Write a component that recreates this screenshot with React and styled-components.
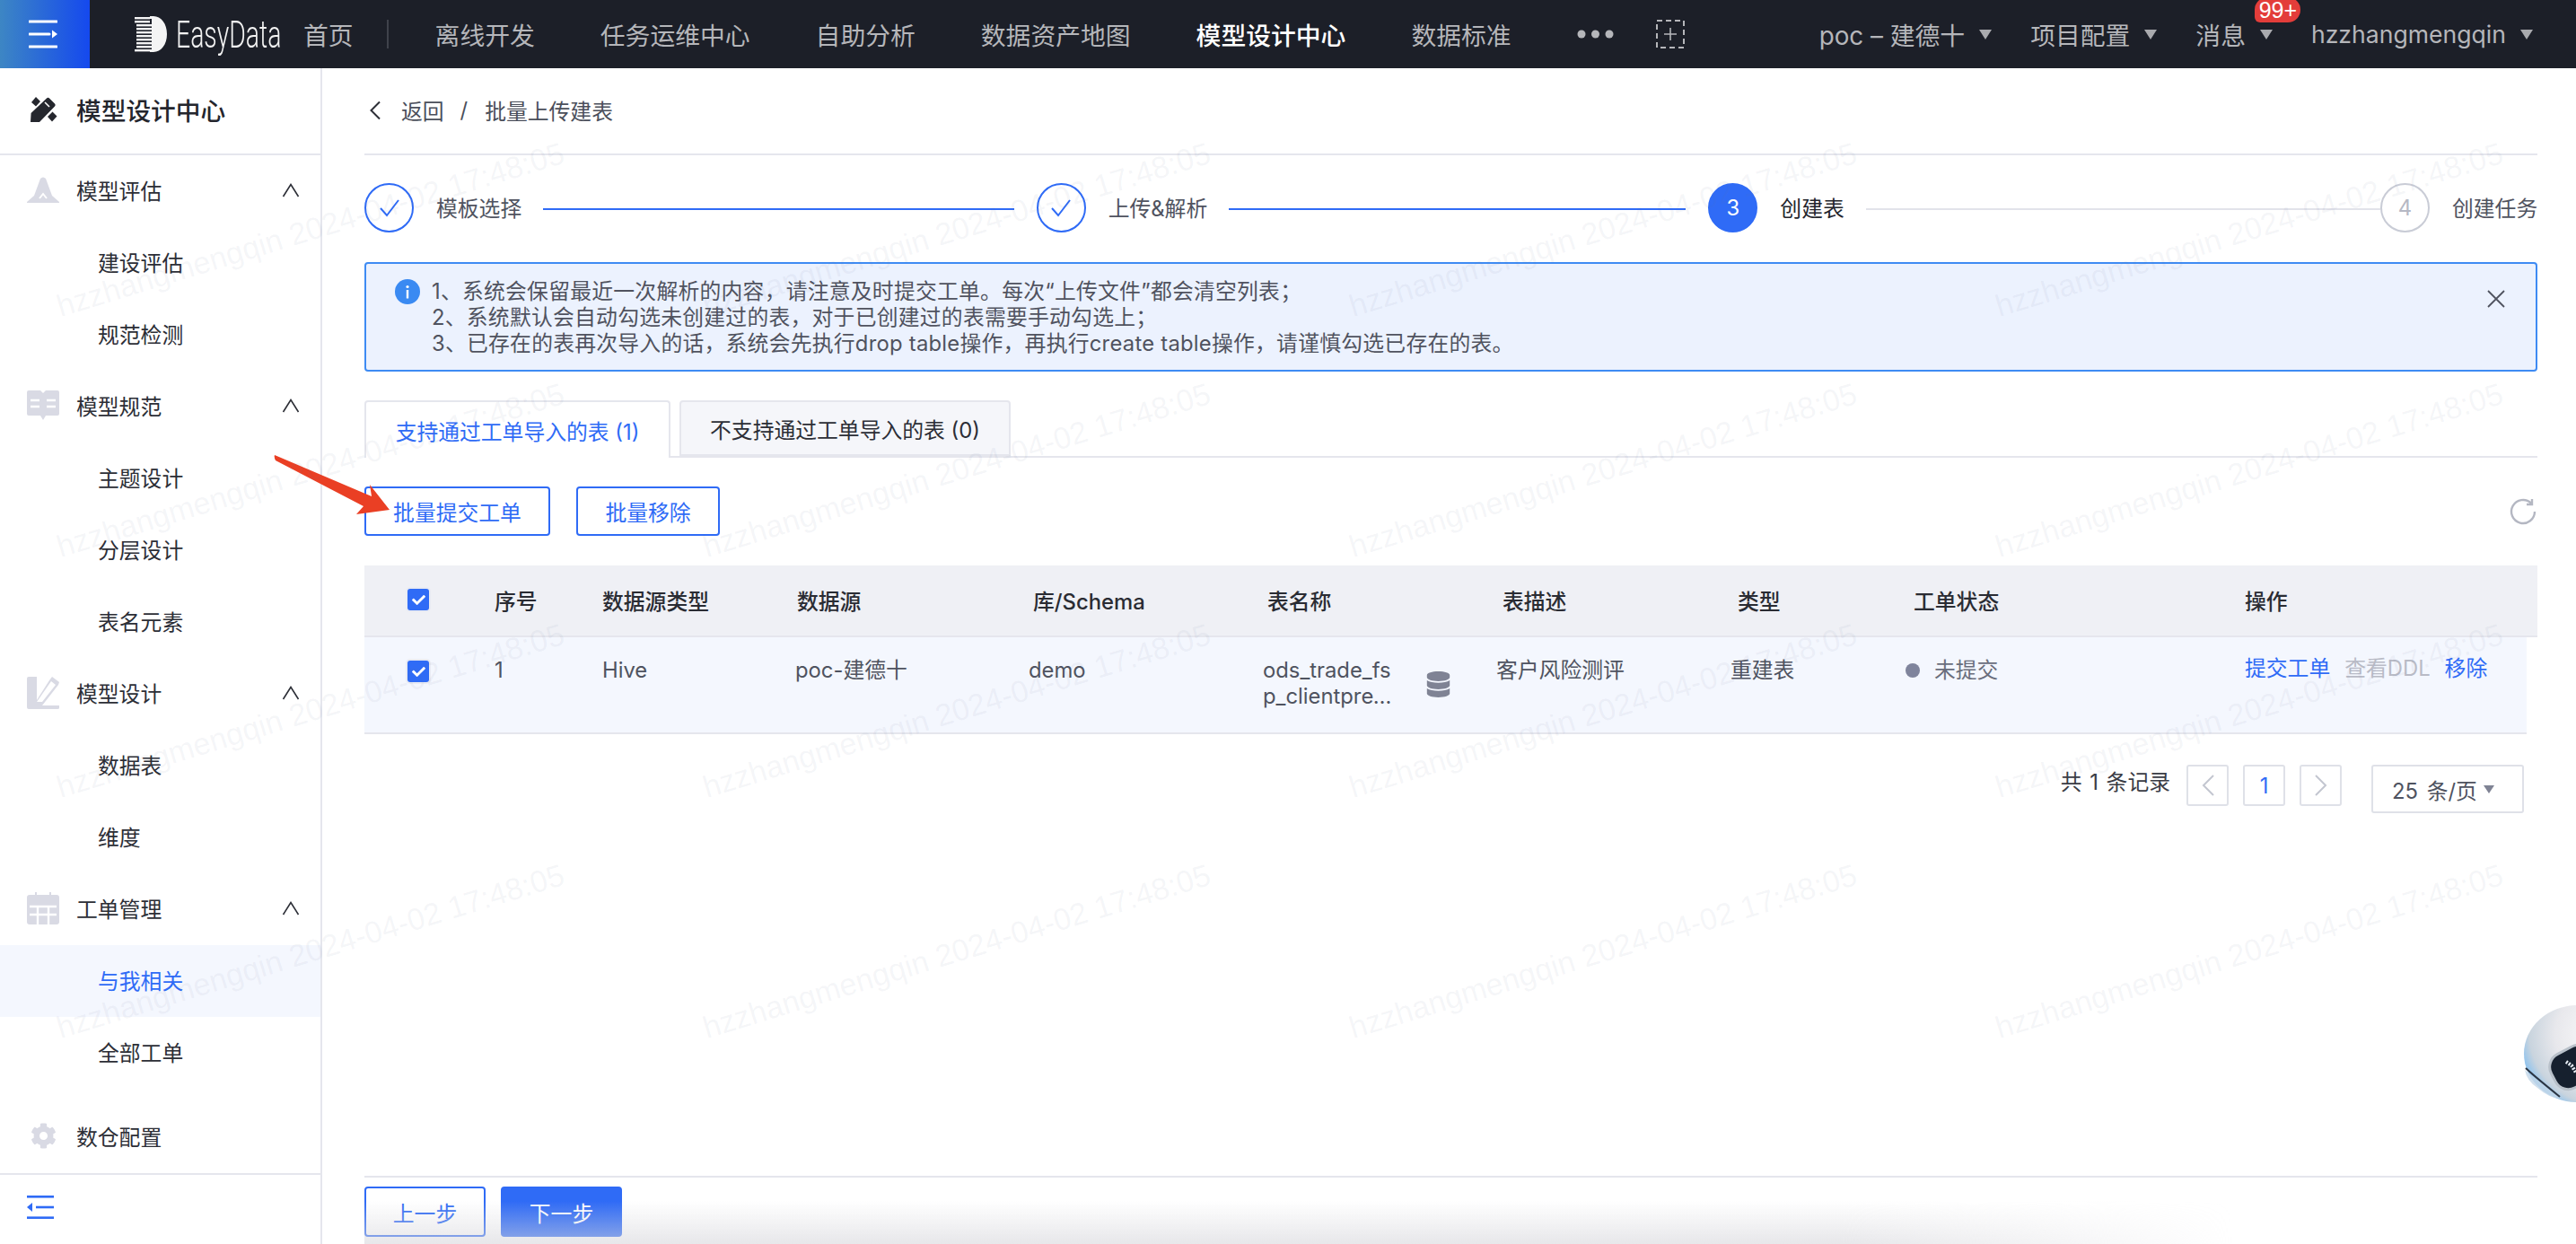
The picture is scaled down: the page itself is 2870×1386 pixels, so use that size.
import React from "react";
import styled, { createGlobalStyle } from "styled-components";
import { FaCog, FaDatabase, FaCheck } from "react-icons/fa";

const FONT = 'Inter,"Noto Sans CJK SC",sans-serif';
const BLUE = "#2f6bf6";
const LINE = "#e5e6ed";

const Global = createGlobalStyle`
  html, body { margin: 0; padding: 0; width: 2870px; height: 1386px; overflow: hidden; background: #fff; }
  body { font-family: ${FONT}; font-size: 23.8px; color: #2c2e36; }
  * { box-sizing: border-box; }
`;

const Page = styled.div`
  position: relative;
  width: 2870px;
  height: 1386px;
  display: flex;
  flex-direction: column;
  overflow: hidden;
`;
const TopBar = styled.header`
  position: relative;
  z-index: 6;
  flex: none;
  height: 76px;
  display: flex;
  align-items: center;
  background: #1c1f28;
  color: #b5b6ba;
  font-size: 27.8px;
`;
const MenuToggle = styled.div`
  width: 100px;
  height: 76px;
  flex: none;
  display: flex;
  align-items: center;
  justify-content: center;
  background: linear-gradient(90deg, #3d86c4, #1549ee);
  padding-right: 4px;
`;
const Brand = styled.div`
  display: flex;
  align-items: center;
  margin-left: 50px;
  width: 188px;
  flex: none;
`;
const BrandMark = styled.svg`
  width: 36px;
  height: 40px;
  flex: none;
`;
const BrandName = styled.span`
  display: block;
  width: 112px;
  flex: none;
  margin-left: 10px;
  color: #f2f2f2;
  font-family: Roboto, sans-serif;
  font-weight: 300;
  font-size: 43px;
  line-height: 1;
  transform: scaleX(0.66);
  transform-origin: left center;
  white-space: nowrap;
`;
const NavItem = styled.span`
  flex: none;
  white-space: nowrap;
  color: ${(p) => (p.$active ? "#fff" : "inherit")};
  font-weight: ${(p) => (p.$active ? 500 : 400)};
`;
const NavSep = styled.i`
  width: 2px;
  height: 32px;
  background: #3f424b;
  margin: 0 52px 0 37px;
  flex: none;
`;
const NavList = styled.nav`
  display: flex;
  align-items: center;
  gap: 73px;
`;
const NavAdd = styled.span`
  margin-left: 47px;
  display: flex;
`;
const NavRight = styled.div`
  margin-left: auto;
  padding-right: 48px;
  display: flex;
  align-items: center;
  gap: 43px;
`;
const NavDrop = styled.span`
  position: relative;
  display: flex;
  align-items: center;
  gap: 16px;
  white-space: nowrap;
  font-size: ${(p) => (p.$latin ? "26.6px" : "inherit")};
`;
const Caret = styled.i`
  width: 0;
  height: 0;
  border-left: ${(p) => (p.$small ? 6 : 7)}px solid transparent;
  border-right: ${(p) => (p.$small ? 6 : 7)}px solid transparent;
  border-top: ${(p) => (p.$small ? 9 : 11)}px solid ${(p) => p.$color || "#a9aaae"};
  flex: none;
`;
const Badge = styled.span`
  position: absolute;
  left: 66px;
  top: -21px;
  width: 51px;
  height: 28px;
  border-radius: 14px 14px 14px 6px;
  background: #e33d3a;
  color: #fff;
  font-family: "Liberation Sans", sans-serif;
  font-size: 25px;
  line-height: 28px;
  text-align: center;
`;
const Body = styled.div`
  flex: 1;
  min-height: 0;
  display: flex;
`;
const Sidebar = styled.aside`
  width: 359px;
  flex: none;
  border-right: 2px solid ${LINE};
  display: flex;
  flex-direction: column;
`;
const SideHead = styled.div`
  height: 97px;
  flex: none;
  display: flex;
  align-items: center;
  gap: 21px;
  padding-left: 33px;
  padding-bottom: 4px;
  border-bottom: 2px solid ${LINE};
  font-size: 27.7px;
  font-weight: 500;
  color: #24262d;
`;
const SideRow = styled.div`
  height: 80px;
  flex: none;
  display: flex;
  align-items: center;
  padding-left: ${(p) => (p.$sub ? "109px" : "30px")};
  padding-bottom: 3px;
  background: ${(p) => (p.$active ? "#f4f7fe" : "transparent")};
  color: ${(p) => (p.$active ? BLUE : "#2c2e36")};
`;
const SideIcon = styled.span`
  width: 36px;
  display: flex;
  justify-content: center;
  margin-right: 19px;
  color: #d9dae4;
  flex: none;
`;
const Chevron = styled.svg`
  margin-left: auto;
  margin-right: 23px;
  width: 20px;
  height: 16px;
`;
const SideFill = styled.div`
  flex: 1;
  min-height: 0;
`;
const SideFoot = styled.div`
  height: 79px;
  flex: none;
  border-top: 2px solid ${LINE};
  display: flex;
  align-items: center;
  padding-left: 30px;
  padding-bottom: 5px;
`;
const Main = styled.main`
  flex: 1;
  min-width: 0;
  display: flex;
  flex-direction: column;
  padding: 0 43px 0 47px;
`;
const Crumb = styled.div`
  height: 97px;
  flex: none;
  display: flex;
  align-items: center;
  border-bottom: 2px solid ${LINE};
  color: #4b4f5b;
  padding-left: 5px;
  padding-bottom: 2px;
`;
const CrumbBack = styled.span`
  margin-left: 22px;
`;
const CrumbSep = styled.span`
  margin: 0 19px 0 18px;
`;
const Steps = styled.div`
  margin-top: 31px;
  display: flex;
  align-items: center;
`;
const Step = styled.div`
  display: flex;
  align-items: center;
  flex: ${(p) => (p.$last ? "none" : "1")};
  min-width: 0;
  width: ${(p) => (p.$last ? "175px" : "auto")};
`;
const StepDot = styled.span`
  width: 55px;
  height: 55px;
  flex: none;
  border-radius: 50%;
  display: flex;
  align-items: center;
  justify-content: center;
  border: 2px solid ${(p) => (p.$state === "todo" ? "#c9ccd6" : BLUE)};
  background: ${(p) => (p.$state === "now" ? BLUE : "#fff")};
  color: ${(p) => (p.$state === "now" ? "#fff" : "#b5b8c4")};
`;
const StepLabel = styled.span`
  margin-left: 25px;
  padding-bottom: 2px;
  white-space: nowrap;
  color: ${(p) => (p.$dark ? "#23252c" : "#50535f")};
`;
const StepLine = styled.i`
  flex: 1;
  height: 2px;
  margin: 2px ${(p) => (p.$tight ? "0" : "25px")} 0 24px;
  background: ${(p) => (p.$done ? BLUE : "#e2e3ea")};
`;
const Alert = styled.div`
  margin-top: 33px;
  height: 122px;
  flex: none;
  border: 2px solid #3e8bf3;
  border-radius: 4px;
  background: #ecf2fe;
  display: flex;
  padding: 16px 34px 0 32px;
  color: #50535f;
  line-height: 29px;
  letter-spacing: 0.25px;
`;
const AlertIcon = styled.span`
  width: 28px;
  height: 28px;
  margin-top: 1px;
  flex: none;
  margin-right: 13px;
`;
const AlertText = styled.div`
  flex: 1;
`;
const AlertClose = styled.svg`
  width: 20px;
  height: 20px;
  margin-top: 13px;
  flex: none;
`;
const TabBar = styled.div`
  margin-top: 32px;
  height: 64px;
  flex: none;
  display: flex;
  gap: 10px;
  border-bottom: 2px solid ${LINE};
`;
const Tab = styled.div`
  width: ${(p) => p.$w}px;
  height: ${(p) => (p.$active ? "64px" : "62px")};
  display: flex;
  align-items: center;
  justify-content: center;
  white-space: nowrap;
  border: 2px solid ${LINE};
  border-bottom: ${(p) => (p.$active ? "none" : `2px solid ${LINE}`)};
  border-radius: 4px 4px 0 0;
  background: ${(p) => (p.$active ? "#fff" : "#f5f6fa")};
  color: ${(p) => (p.$active ? BLUE : "#2c2e36")};
`;
const Actions = styled.div`
  margin-top: 32px;
  display: flex;
  align-items: center;
  gap: 29px;
`;
const Button = styled.button`
  height: ${(p) => p.$h || 55}px;
  width: ${(p) => p.$w}px;
  border: 2px solid ${BLUE};
  border-radius: 4px;
  background: ${(p) => (p.$solid ? BLUE : "#fff")};
  color: ${(p) => (p.$solid ? "#fff" : BLUE)};
  font: inherit;
  padding: 0;
`;
const Refresh = styled.svg`
  margin-left: auto;
  margin-right: 0;
  width: 32px;
  height: 32px;
`;
const Table = styled.div`
  margin-top: 33px;
  display: flex;
  flex-direction: column;
`;
const HeadRow = styled.div`
  height: 80px;
  display: grid;
  grid-template-columns: 145px 120px 217px 263px 261px 262px 262px 196px 369px 326px;
  align-items: center;
  background: #eff0f5;
  border-bottom: 2px solid ${LINE};
  font-weight: 500;
  color: #2a2c33;
  padding-bottom: 2px;
`;
const DataRow = styled.div`
  height: 108px;
  width: 2409px;
  display: grid;
  grid-template-columns: 145px 120px 215px 260px 261px 260px 261px 195px 378px 314px;
  align-items: start;
  background: #f4f7fe;
  border-bottom: 2px solid ${LINE};
  padding-top: 22px;
  color: #4f5360;
  line-height: 29px;
`;
const CheckCell = styled.div`
  padding-left: 48px;
  display: flex;
`;
const CheckBox = styled.span`
  width: 24px;
  height: 24px;
  border-radius: 3px;
  background: ${BLUE};
  box-shadow: 0 0 0 2px #e9ebf3;
  color: #fff;
  display: flex;
  align-items: center;
  justify-content: center;
  font-size: 15px;
  margin-top: ${(p) => p.$mt || 0}px;
`;
const NameCell = styled.div`
  display: flex;
  align-items: flex-start;
`;
const NameText = styled.span`
  width: 151px;
  word-break: break-all;
  display: -webkit-box;
  -webkit-box-orient: vertical;
  -webkit-line-clamp: 2;
  overflow: hidden;
`;
const DbIcon = styled.span`
  margin: 16px 0 0 30px;
  color: #7f8394;
  font-size: 29px;
  line-height: 1;
  display: flex;
`;
const Status = styled.div`
  display: flex;
  align-items: center;
  gap: 16px;
  color: #6a6e7c;
`;
const StatusDot = styled.i`
  width: 16px;
  height: 16px;
  border-radius: 50%;
  background: #7f849c;
`;
const Ops = styled.div`
  display: flex;
  gap: 16px;
  white-space: nowrap;
  margin-top: -2px;
`;
const OpLink = styled.span`
  color: ${(p) => (p.$disabled ? "#b9bbc6" : BLUE)};
`;
const Pager = styled.div`
  margin-top: 34px;
  padding-right: 15px;
  display: flex;
  justify-content: flex-end;
  align-items: flex-start;
  gap: 16px;
`;
const PagerTotal = styled.span`
  line-height: 40px;
  margin-right: 2px;
  word-spacing: 2px;
  color: #3a3c45;
`;
const PageBox = styled.span`
  width: 47px;
  height: 46px;
  border: 2px solid #dfe1e8;
  border-radius: 3px;
  display: flex;
  align-items: center;
  justify-content: center;
  color: ${BLUE};
`;
const PageSize = styled.div`
  width: 170px;
  height: 54px;
  margin-left: 17px;
  border: 2px solid #dfe1e8;
  border-radius: 3px;
  display: flex;
  align-items: center;
  gap: 7px;
  padding-left: 21px;
  color: #4f5360;
  white-space: nowrap;
  word-spacing: 3px;
`;
const Footer = styled.footer`
  position: relative;
  margin-top: auto;
  height: 76px;
  flex: none;
  border-top: 2px solid ${LINE};
  padding-top: 10px;
  display: flex;
  gap: 17px;
  align-items: flex-start;
  &::after {
    content: "";
    position: absolute;
    left: 0;
    right: 0;
    top: 0;
    bottom: 0;
    pointer-events: none;
    background: linear-gradient(180deg, rgba(215, 215, 220, 0) 35%, rgba(215, 215, 220, 0.6) 100%);
    -webkit-mask-image: linear-gradient(90deg, #000 68%, transparent 86%);
    mask-image: linear-gradient(90deg, #000 68%, transparent 86%);
  }
`;
const WatermarkLayer = styled.div`
  position: absolute;
  inset: 0;
  z-index: 5;
  pointer-events: none;
  padding: 90px 0 0 69px;
  display: grid;
  grid-template-columns: repeat(4, 720px);
  grid-auto-rows: 268px;
  overflow: hidden;
`;
const WatermarkText = styled.span`
  align-self: end;
  justify-self: start;
  white-space: nowrap;
  font-family: "Liberation Sans", sans-serif;
  font-size: 34.3px;
  line-height: 1;
  color: rgba(100, 112, 155, 0.07);
  transform: rotate(-17deg);
  transform-origin: left bottom;
`;
const Annotation = styled.svg`
  position: absolute;
  left: 296px;
  top: 500px;
  width: 150px;
  height: 80px;
  z-index: 4;
`;
const Robot = styled.svg`
  position: absolute;
  right: 0;
  top: 1116px;
  width: 60px;
  height: 116px;
  z-index: 7;
`;

const HamburgerIcon = () => (
  <svg width="32" height="32" viewBox="0 0 32 32" fill="none">
    <path d="M1 2h30M1 16h22M1 30h30" stroke="#fff" strokeWidth="3" strokeLinecap="round" />
    <path d="M26 11.5l6 4.5-6 4.5z" fill="#fff" />
  </svg>
);
const LogoMark = () => (
  <BrandMark viewBox="0 0 36 40" fill="#f4f4f4">
    {[1, 5, 9, 13, 17, 21, 25, 29, 33, 37].map((y) => (
      <rect key={y} x={y < 6 || y > 33 ? 0 : 2} y={y} width="17" height="2.4" />
    ))}
    <path d="M17 0h4c8.5 0 15 8.5 15 20s-6.5 20-15 20h-4v-3h2V3h-2z" />
  </BrandMark>
);
const DotsIcon = () => (
  <svg width="41" height="10" viewBox="0 0 41 10" fill="#b5b6ba">
    <circle cx="5" cy="5" r="4.5" />
    <circle cx="20.5" cy="5" r="4.5" />
    <circle cx="36" cy="5" r="4.5" />
  </svg>
);
const AddBox = () => (
  <svg width="32" height="32" viewBox="0 0 32 32" fill="none" stroke="#b5b6ba">
    <rect x="1" y="1" width="30" height="30" strokeWidth="2" strokeDasharray="6 4" />
    <path d="M16 9v14M9 16h14" strokeWidth="1.6" />
  </svg>
);
const TitleIcon = () => (
  <svg width="31" height="30" viewBox="0 0 31 30" fill="#25272e">
    <path d="M1 29l.6-10L19 2.500q1.500-1.500 3 0l6 6q1.500 1.500 0 3L11 29z" />
    <path d="M22 12l-5-5" stroke="#fff" strokeWidth="1.6" />
    <path d="M2 7l5-6 5 5-5 5.500zM4 6l3-3M20 23l5.500-5.500 5 5L25 28.500zM23 24l3-3" />
  </svg>
);
const WarnIcon = () => (
  <svg width="36" height="29" viewBox="0 0 36 29" fill="#d9dae4">
    <path d="M15 2q3-3 6 0l7 19 8 7v1H0v-1l8-7z" />
    <path d="M14 24l4-5 4 5" stroke="#fff" strokeWidth="2" fill="none" />
  </svg>
);
const BookIcon = () => (
  <svg width="36" height="33" viewBox="0 0 36 33" fill="#d9dae4">
    <path d="M2 0h13l3 3 3-3h13q2 0 2 2v24q0 2-2 2H21l-3 5-3-5H2q-2 0-2-2V2q0-2 2-2z" />
    <path d="M4 11h10M22 11h10M4 18h10M22 18h10" stroke="#fff" strokeWidth="2.4" />
  </svg>
);
const DesignIcon = () => (
  <svg width="36" height="36" viewBox="0 0 36 36" fill="none">
    <path d="M2 0h9v26L25 4l3-4 8 6-1 3-18 23h19v3q0 1-2 1H2q-2 0-2-2V2q0-2 2-2z" fill="#d9dae4" />
    <path d="M27 5l5 4-15 19h-6z" fill="#fff" />
  </svg>
);
const CalendarIcon = () => (
  <svg width="36" height="36" viewBox="0 0 36 36" fill="#d9dae4">
    <path d="M9 0h2v3h14V0h2v3h6q3 0 3 3v27q0 3-3 3H3q-3 0-3-3V6q0-3 3-3h6z" />
    <path d="M3 16h30M3 25h30M12 16v20M24 16v20" stroke="#fff" strokeWidth="2.4" />
  </svg>
);
const CollapseIcon = () => (
  <svg width="30" height="26" viewBox="0 0 30 26" fill={BLUE}>
    <rect width="30" height="2.6" />
    <rect x="10" y="11.7" width="20" height="2.6" />
    <rect y="23.4" width="30" height="2.6" />
    <path d="M6 8v10l-6-5z" />
  </svg>
);
const ChevronUp = () => (
  <Chevron viewBox="0 0 20 16" fill="none" stroke="#2c2e36" strokeWidth="1.6">
    <path d="M1.5 15L10 1.5 18.5 15" />
  </Chevron>
);
const CrumbBackIcon = () => (
  <svg width="14" height="22" viewBox="0 0 14 22" fill="none" stroke="#2c2e36" strokeWidth="2">
    <path d="M12 1.5L2.5 11 12 20.5" />
  </svg>
);
const StepCheck = () => (
  <svg width="22" height="20" viewBox="0 0 22 20" fill="none" stroke={BLUE} strokeWidth="2">
    <path d="M1 10l7 8L21 1" />
  </svg>
);
const InfoIcon = () => (
  <svg width="28" height="28" viewBox="0 0 28 28">
    <circle cx="14" cy="14" r="14" fill="#3a8af2" />
    <circle cx="14" cy="8.5" r="1.6" fill="#fff" />
    <rect x="12.8" y="12" width="2.4" height="9.5" fill="#fff" />
  </svg>
);
const PageArrow = ({ dir }) => (
  <svg width="14" height="24" viewBox="0 0 14 24" fill="none" stroke="#c3c6d0" strokeWidth="2">
    <path d={dir === "prev" ? "M13 1L2 12l11 11" : "M1 1l11 11L1 23"} />
  </svg>
);

const SIDE_MENU = [
  { icon: <WarnIcon />, label: "模型评估", subs: ["建设评估", "规范检测"] },
  { icon: <BookIcon />, label: "模型规范", subs: ["主题设计", "分层设计", "表名元素"] },
  { icon: <DesignIcon />, label: "模型设计", subs: ["数据表", "维度"] },
  { icon: <CalendarIcon />, label: "工单管理", subs: ["与我相关", "全部工单"], active: "与我相关" },
];
const NAV = ["离线开发", "任务运维中心", "自助分析", "数据资产地图", "模型设计中心", "数据标准"];
const HEADS = ["序号", "数据源类型", "数据源", "库/Schema", "表名称", "表描述", "类型", "工单状态", "操作"];
const WATERMARKS = Array.from({ length: 16 }, (_, i) => i);

export default function App() {
  return (
    <Page>
      <Global />
      <TopBar>
        <MenuToggle>
          <HamburgerIcon />
        </MenuToggle>
        <Brand>
          <LogoMark />
          <BrandName>EasyData</BrandName>
        </Brand>
        <NavItem>首页</NavItem>
        <NavSep />
        <NavList>
          {NAV.map((n) => (
            <NavItem key={n} $active={n === "模型设计中心"}>
              {n}
            </NavItem>
          ))}
          <DotsIcon />
        </NavList>
        <NavAdd>
          <AddBox />
        </NavAdd>
        <NavRight>
          <NavDrop>
            poc – 建德十 <Caret />
          </NavDrop>
          <NavDrop>
            项目配置 <Caret />
          </NavDrop>
          <NavDrop>
            消息 <Caret />
            <Badge>99+</Badge>
          </NavDrop>
          <NavDrop $latin>
            hzzhangmengqin <Caret />
          </NavDrop>
        </NavRight>
      </TopBar>
      <Body>
        <Sidebar>
          <SideHead>
            <TitleIcon />
            模型设计中心
          </SideHead>
          {SIDE_MENU.map((g) => (
            <React.Fragment key={g.label}>
              <SideRow>
                <SideIcon>{g.icon}</SideIcon>
                {g.label}
                <ChevronUp />
              </SideRow>
              {g.subs.map((s) => (
                <SideRow key={s} $sub $active={s === g.active}>
                  {s}
                </SideRow>
              ))}
            </React.Fragment>
          ))}
          <SideFill />
          <SideRow>
            <SideIcon>
              <FaCog size={29} />
            </SideIcon>
            数仓配置
          </SideRow>
          <SideFoot>
            <CollapseIcon />
          </SideFoot>
        </Sidebar>
        <Main>
          <Crumb>
            <CrumbBackIcon />
            <CrumbBack>返回</CrumbBack>
            <CrumbSep>/</CrumbSep>
            批量上传建表
          </Crumb>
          <Steps>
            <Step>
              <StepDot $state="done">
                <StepCheck />
              </StepDot>
              <StepLabel>模板选择</StepLabel>
              <StepLine $done />
            </Step>
            <Step>
              <StepDot $state="done">
                <StepCheck />
              </StepDot>
              <StepLabel>上传&amp;解析</StepLabel>
              <StepLine $done />
            </Step>
            <Step>
              <StepDot $state="now">3</StepDot>
              <StepLabel $dark>创建表</StepLabel>
              <StepLine $tight />
            </Step>
            <Step $last>
              <StepDot $state="todo">4</StepDot>
              <StepLabel>创建任务</StepLabel>
            </Step>
          </Steps>
          <Alert>
            <AlertIcon>
              <InfoIcon />
            </AlertIcon>
            <AlertText>
              <div>1、系统会保留最近一次解析的内容，请注意及时提交工单。每次“上传文件”都会清空列表；</div>
              <div>2、系统默认会自动勾选未创建过的表，对于已创建过的表需要手动勾选上；</div>
              <div>3、已存在的表再次导入的话，系统会先执行drop table操作，再执行create table操作，请谨慎勾选已存在的表。</div>
            </AlertText>
            <AlertClose viewBox="0 0 20 20" fill="none" stroke="#50535f" strokeWidth="1.8">
              <path d="M1 1l18 18M19 1L1 19" />
            </AlertClose>
          </Alert>
          <TabBar>
            <Tab $active $w={341}>
              支持通过工单导入的表 (1)
            </Tab>
            <Tab $w={369}>不支持通过工单导入的表 (0)</Tab>
          </TabBar>
          <Actions>
            <Button $w={207}>批量提交工单</Button>
            <Button $w={160}>批量移除</Button>
            <Refresh viewBox="0 0 32 32" fill="none" stroke="#b4b7c2" strokeWidth="2.4">
              <path d="M29 16a13 13 0 1 1-4-9.4M26 2v6h-6" />
            </Refresh>
          </Actions>
          <Table>
            <HeadRow>
              <CheckCell>
                <CheckBox>
                  <FaCheck />
                </CheckBox>
              </CheckCell>
              {HEADS.map((h) => (
                <div key={h}>{h}</div>
              ))}
            </HeadRow>
            <DataRow>
              <CheckCell>
                <CheckBox $mt={4}>
                  <FaCheck />
                </CheckBox>
              </CheckCell>
              <div>1</div>
              <div>Hive</div>
              <div>poc-建德十</div>
              <div>demo</div>
              <NameCell>
                <NameText>ods_trade_fsp_clientpreview_result</NameText>
                <DbIcon>
                  <FaDatabase />
                </DbIcon>
              </NameCell>
              <div>客户风险测评</div>
              <div>重建表</div>
              <Status>
                <StatusDot />
                未提交
              </Status>
              <Ops>
                <OpLink>提交工单</OpLink>
                <OpLink $disabled>查看DDL</OpLink>
                <OpLink>移除</OpLink>
              </Ops>
            </DataRow>
          </Table>
          <Pager>
            <PagerTotal>共 1 条记录</PagerTotal>
            <PageBox>
              <PageArrow dir="prev" />
            </PageBox>
            <PageBox>1</PageBox>
            <PageBox>
              <PageArrow dir="next" />
            </PageBox>
            <PageSize>
              25 条/页 <Caret $small $color="#7f8394" />
            </PageSize>
          </Pager>
          <Footer>
            <Button $w={135} $h={56}>
              上一步
            </Button>
            <Button $w={135} $h={56} $solid>
              下一步
            </Button>
          </Footer>
        </Main>
      </Body>
      <Annotation viewBox="0 0 150 80">
        <path d="M10 7l108 46-2-13 22 28-37 5 8-9-98-51q-2-4-1-6z" fill="#ea3f24" />
      </Annotation>
      <Robot viewBox="0 0 60 116">
        <defs>
          <radialGradient id="shell" cx="0.8" cy="0.3" r="0.85">
            <stop offset="0" stopColor="#ffffff" />
            <stop offset="0.6" stopColor="#e8e8ec" />
            <stop offset="0.88" stopColor="#c9d4de" />
            <stop offset="1" stopColor="#8fc3ee" />
          </radialGradient>
        </defs>
        <ellipse cx="62" cy="58" rx="60" ry="54" fill="url(#shell)" />
        <path d="M3 76q2 12 14 20 14 12 26 12" fill="#c3d7e8" opacity="0.8" />
        <path d="M4 74q6 6 38 32" fill="none" stroke="#2a3442" strokeWidth="2" />
        <rect x="32" y="52" width="50" height="42" rx="16" fill="#16202e" stroke="#b8c0c9" strokeWidth="3" transform="rotate(-28 57 73)" />
        <path d="M49 67l6 4 5 8" fill="none" stroke="#e8eef5" strokeWidth="4" strokeDasharray="2 1.5" />
      </Robot>
      <WatermarkLayer>
        {WATERMARKS.map((i) => (
          <WatermarkText key={i}>hzzhangmengqin 2024-04-02 17:48:05</WatermarkText>
        ))}
      </WatermarkLayer>
    </Page>
  );
}
